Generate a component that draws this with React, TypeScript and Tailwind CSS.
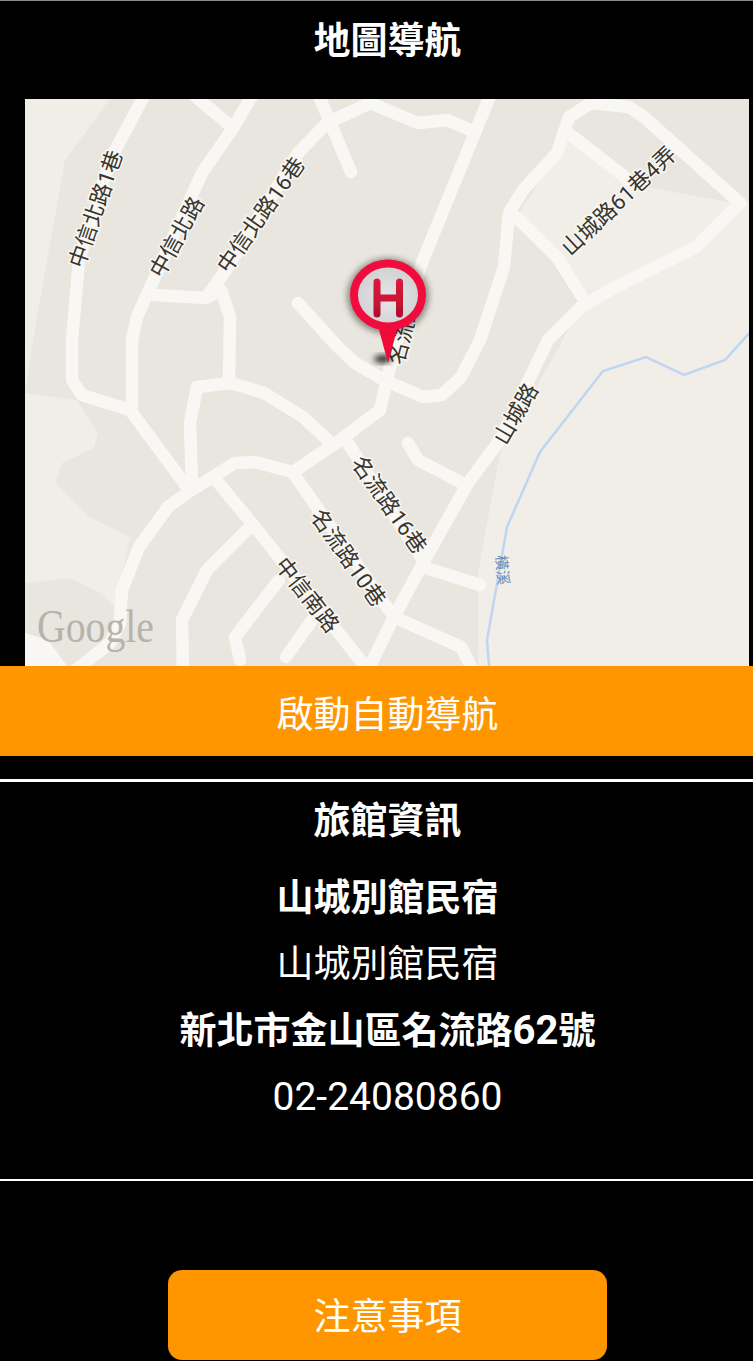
const font = { fontFamily: 'Roboto, "Noto Sans CJK TC", sans-serif' }

// polylines in page coordinates, the svg viewBox starts at the map's corner
const roads = [
  '144,96 110,160 79,260 72,340 72,380 82,395 130,410 187,487',
  '252,96 233,128 202,173 149,290 137,317 132,340 132,407',
  '195,96 233,128',
  '319,96 351,172',
  '206,298 154,295',
  '226,270 206,298 221,290 230,317 229,380',
  '370,103 327,123 298,153 226,270',
  '327,123 370,103 418,123 447,120 475,132',
  '490,96 461,167 423,260 400,330 388,375 380,410 336,443 293,472 255,462 235,463 187,493 168,507 139,547 122,590 120,623 110,643 76,670',
  '298,303 336,345 355,363 384,380 423,397 442,395 461,377 480,340 504,267 509,213 523,190 557,153 569,117 591,103 629,107 644,117 740,203',
  '567,132 635,185',
  '740,203 696,247 610,290 581,307 548,340 500,440 468,483 423,563 394,617 368,670',
  '516,217 557,257 586,303',
  '408,443 418,460 466,485',
  '423,567 480,585',
  '394,617 461,647 473,670',
  '346,440 423,560',
  '293,473 394,617',
  '216,480 255,527 368,670',
  '250,527 207,570 182,620 183,670',
  '279,580 235,637 240,660',
  '317,613 286,657',
  '192,487 190,423 197,387 231,383 264,393 303,417 331,443',
]

const labels = [
  { text: '中信北路1巷', x: 96, y: 209, r: -71 },
  { text: '中信北路', x: 177, y: 237, r: -61 },
  { text: '中信北路16巷', x: 261, y: 215, r: -55 },
  { text: '山城路61巷4弄', x: 619, y: 201, r: -43 },
  { text: '名流路', x: 404, y: 332, r: -75 },
  { text: '山城路', x: 516, y: 414, r: -60 },
  { text: '名流路16巷', x: 389, y: 505, r: 55 },
  { text: '名流路10巷', x: 348, y: 558, r: 55 },
  { text: '中信南路', x: 307, y: 595, r: 52 },
]

function MapView() {
  return (
    <svg viewBox="25 99 724 567" className="block w-[724px] h-[567px] ml-[25px]" style={font}>
      <defs>
        <radialGradient id="face" cx="50%" cy="55%" r="55%">
          <stop offset="0%" stopColor="#e6e6e8" />
          <stop offset="100%" stopColor="#cfcfd2" />
        </radialGradient>
        <linearGradient id="letter" gradientUnits="userSpaceOnUse" x1="0" y1="278" x2="0" y2="317">
          <stop offset="0%" stopColor="#e01a3c" />
          <stop offset="100%" stopColor="#b00f2e" />
        </linearGradient>
        <filter id="soft" x="-50%" y="-50%" width="200%" height="200%">
          <feGaussianBlur stdDeviation="3" />
        </filter>
        <filter id="tiny" x="-20%" y="-20%" width="140%" height="140%">
          <feGaussianBlur stdDeviation="0.7" />
        </filter>
      </defs>

      <rect x="25" y="99" width="724" height="567" fill="#e9e6df" />

      {/* lighter land */}
      <polygon fill="#f0eee6" points="25,99 110,99 65,160 33,340 25,393" />
      <polygon fill="#f0eee6" points="25,393 77,400 98,433 94,448 62,463 55,483 89,517 130,537 115,607 100,593 70,578 25,583" />
      <polygon fill="#f8f7f3" points="25,633 48,640 67,666 25,666" />
      <polygon fill="#f0eee6" points="478,666 478,573 500,453 581,307 610,290 696,247 749,200 749,666" />
      <polygon fill="#f0eee6" points="519,213 567,140 635,185 734,203 696,240 590,296 557,257" />

      {/* river */}
      <polyline
        points="752,330 725,360 684,375 646,357 603,371 540,452 507,527 487,640 489,666"
        fill="none"
        stroke="#bfd6f2"
        strokeWidth="2.5"
      />

      {roads.map((r, i) => (
        <polyline
          key={i}
          points={r}
          fill="none"
          stroke="#f8f7f3"
          strokeWidth="12.5"
          strokeLinecap="round"
          strokeLinejoin="round"
        />
      ))}

      {labels.map((l) => (
        <text
          key={l.text + l.x}
          x={l.x}
          y={l.y}
          transform={`rotate(${l.r} ${l.x} ${l.y})`}
          textAnchor="middle"
          dominantBaseline="central"
          fontSize="22"
          fill="#38342e"
          stroke="#f8f7f3"
          strokeWidth="3"
          paintOrder="stroke"
        >
          {l.text}
        </text>
      ))}

      <text
        x="502"
        y="570"
        transform="rotate(85 502 570)"
        textAnchor="middle"
        dominantBaseline="central"
        fontSize="15"
        fill="#6b8bb5"
      >
        橫溪
      </text>

      <text
        x="37"
        y="642"
        fontSize="47"
        fill="#b5b3ac"
        style={{ fontFamily: '"Liberation Serif", serif' }}
        textLength="117"
        lengthAdjust="spacingAndGlyphs"
      >
        Google
      </text>

      {/* hotel pin */}
      <ellipse cx="383" cy="359" rx="9" ry="3.5" fill="#000" opacity="0.95" filter="url(#soft)" />
      <ellipse cx="388" cy="296" rx="41" ry="38" fill="#000" opacity="0.4" filter="url(#soft)" />
      <polygon points="378,326 398,326 388,363" fill="#ee0b36" />
      <g filter="url(#tiny)">
        <ellipse cx="388" cy="295" rx="34" ry="31.5" fill="url(#face)" stroke="#f0103c" strokeWidth="8" />
        <path d="M377 282 V314 M399.500 282 V314" fill="none" stroke="url(#letter)" strokeWidth="7" strokeLinecap="round" />
        <path d="M377 298 H399.500" stroke="#cf1238" strokeWidth="7" />
      </g>
    </svg>
  )
}

export default function App() {
  return (
    <main className="w-[753px] h-[1361px] bg-black text-white overflow-hidden flex flex-col" style={font}>
      <div className="h-px bg-[#8a8a8a]" />

      <h2 className="h-[98px] pt-[14px] pl-[22px] text-center text-[37px] leading-[54px] font-bold">地圖導航</h2>

      <MapView />

      <button className="block w-full h-[90px] pl-[22px] pt-[10px] bg-[#ff9600] text-[37px] text-white">
        啟動自動導航
      </button>

      <div className="mt-[23px] h-[3px] bg-white" />

      <h2 className="h-[56px] pt-[13px] pl-[22px] text-center text-[37px] leading-[54px] font-bold">旅館資訊</h2>

      <div className="mt-[28px] pl-[22px] flex flex-col items-center text-[37px] leading-[66px]">
        <p className="font-bold">山城別館民宿</p>
        <p>山城別館民宿</p>
        <p className="h-[66px] font-bold">
          新北市金山區名流路<span className="text-[40px]">62</span>號
        </p>
        <p className="text-[39px]">02-24080860</p>
      </div>

      <div className="mt-[49px] h-[2px] bg-white" />

      <button className="mt-[89px] ml-[168px] w-[439px] h-[90px] pt-[6px] rounded-[14px] bg-[#ff9600] text-[37px] text-white">
        注意事項
      </button>
    </main>
  )
}
